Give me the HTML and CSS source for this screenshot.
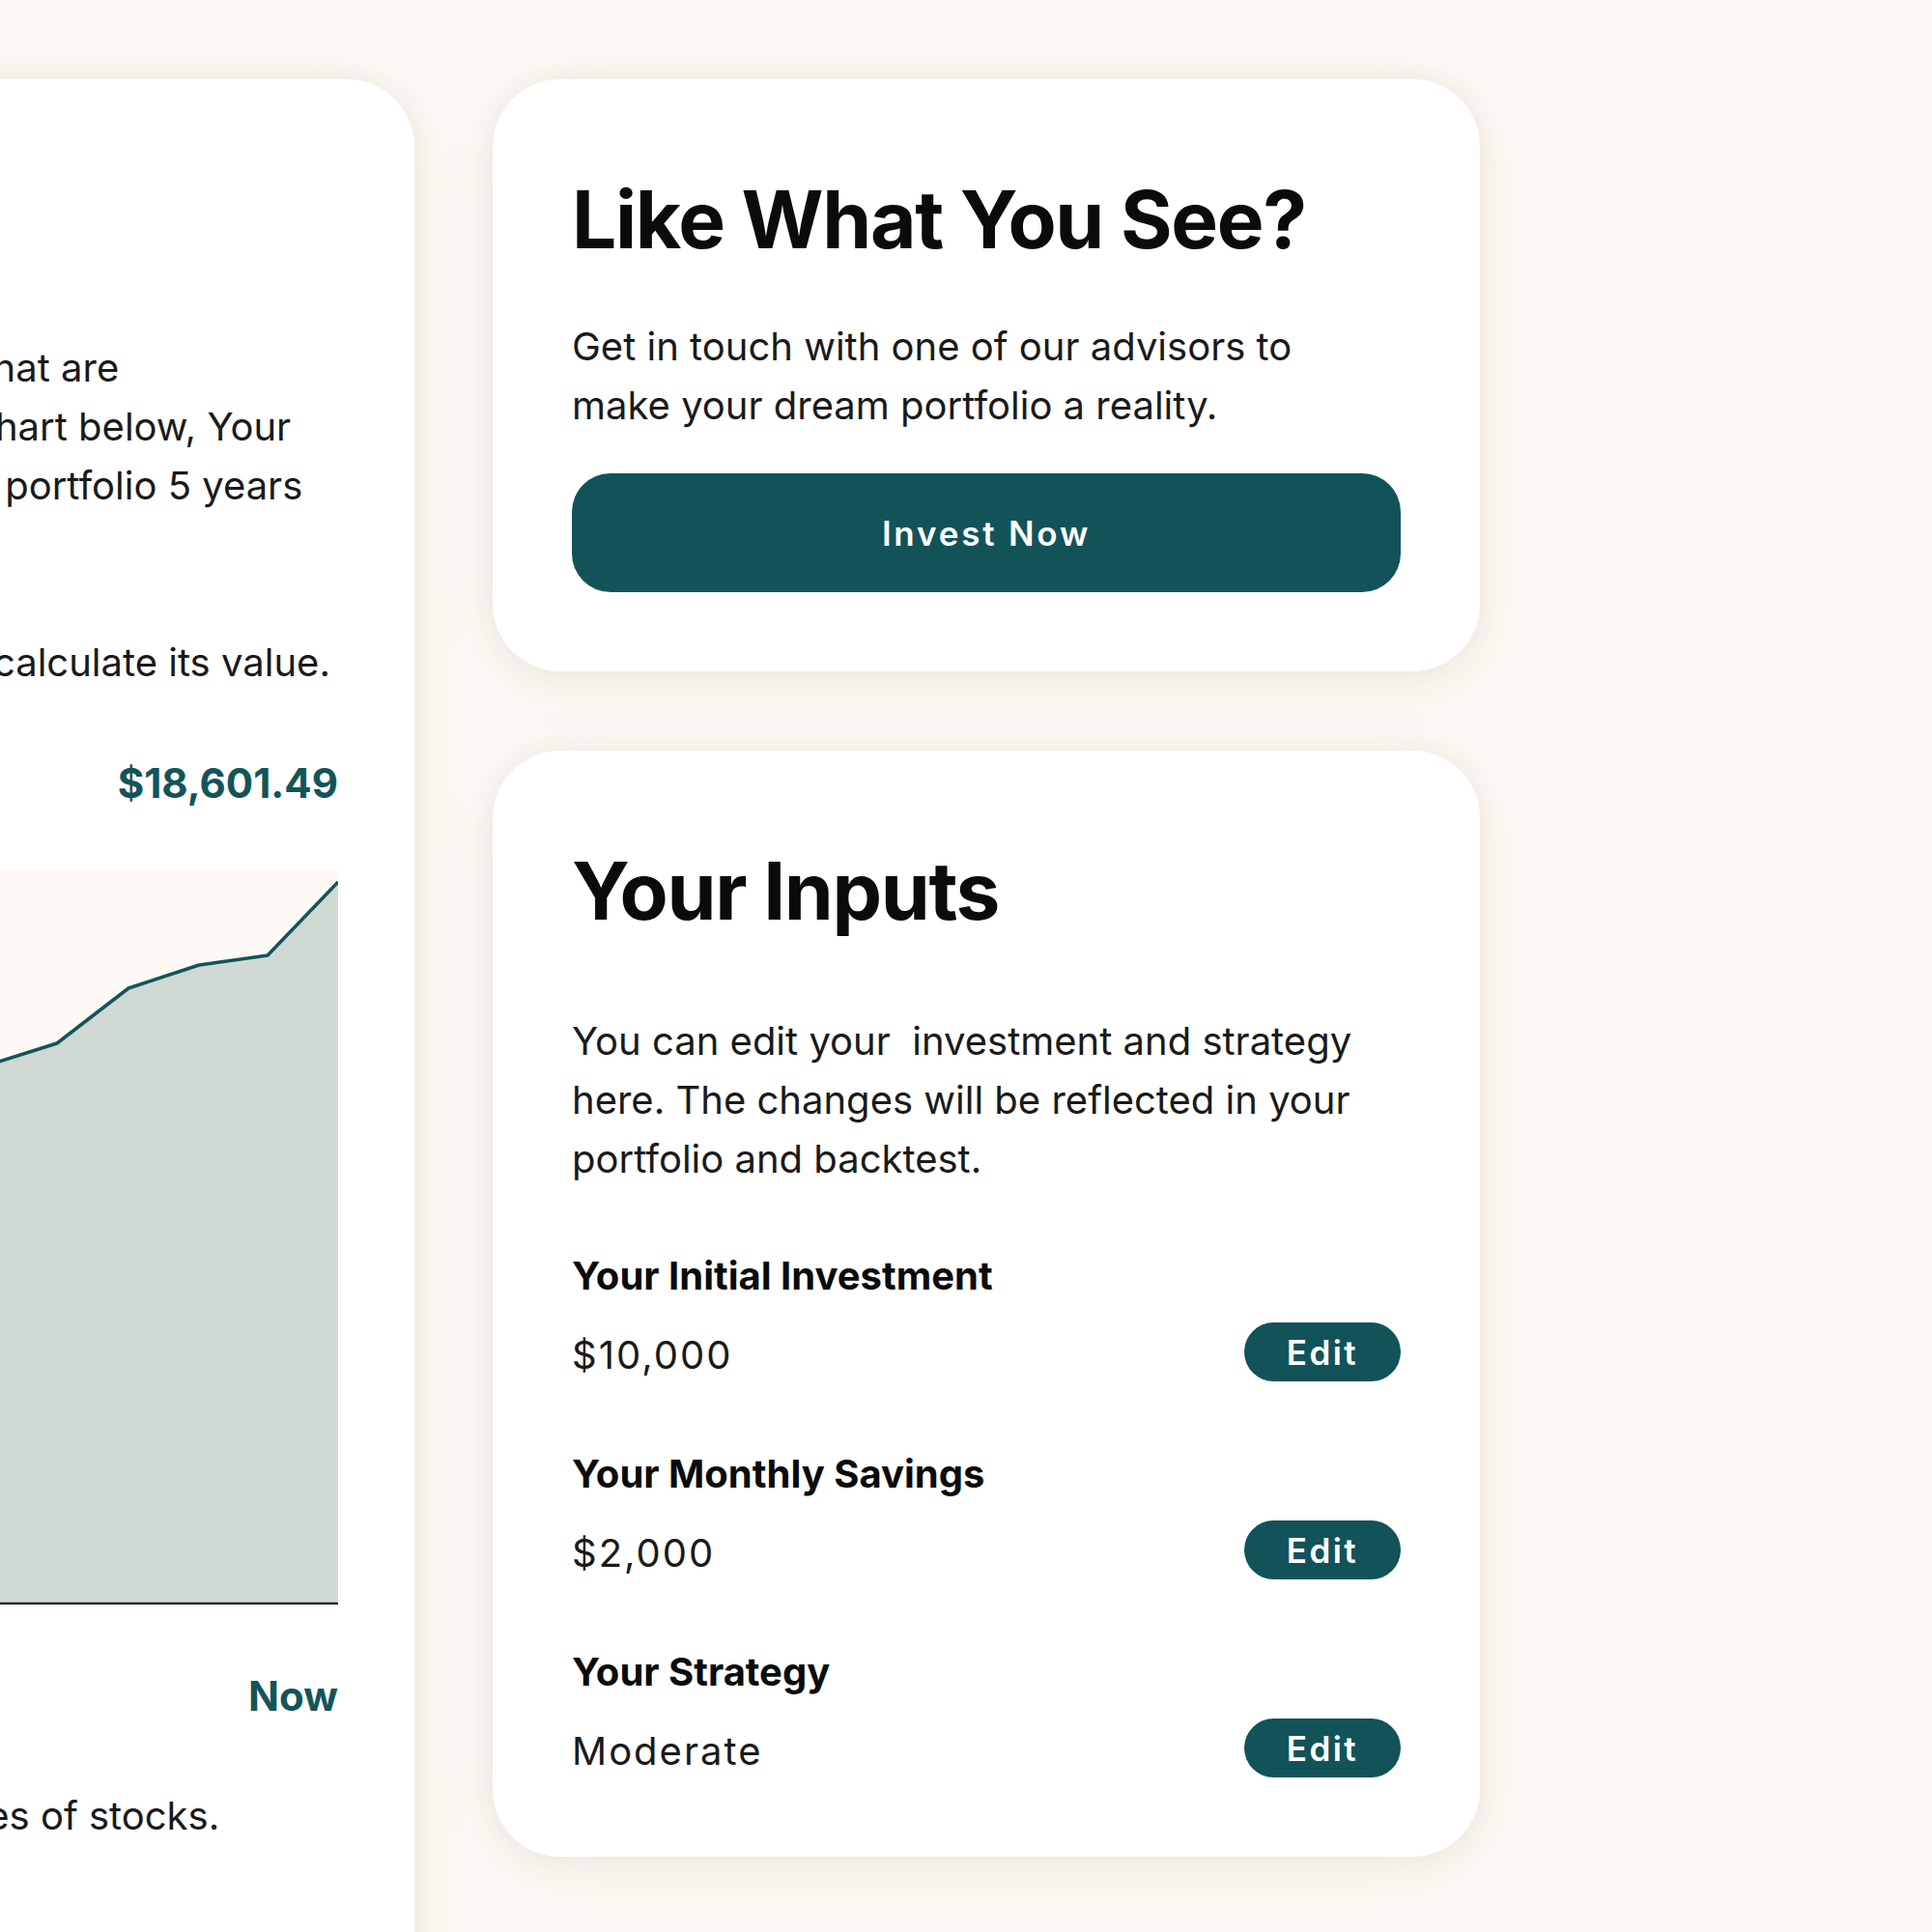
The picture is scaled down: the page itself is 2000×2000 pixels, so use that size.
FILE: index.html
```html
<!DOCTYPE html>
<html lang="en">
<head>
<meta charset="utf-8">
<title>Your Portfolio</title>
<link rel="stylesheet" href="styles.css">
</head>
<body>
<main class="page">
  <section class="card backtest">
    <h2 class="title">Backtest</h2>
    <div class="copy copy-first">
      <div class="line">Backtesting shows what are</div>
      <div class="line">all the results in the chart below, Your</div>
      <div class="line">the real value of your portfolio 5 years</div>
      <div class="line">ago until today.</div>
    </div>
    <div class="copy copy-second">
      <div class="line">We use the prices to calculate its value.</div>
    </div>
    <div class="stat-row">
      <span class="stat-label">Today</span>
      <span class="stat-value">$18,601.49</span>
    </div>
    <div class="chart">
      <svg class="chart-svg" viewBox="0 0 742 761" preserveAspectRatio="none">
        <rect x="0" y="0" width="742" height="761" fill="#fdf9f4"/>
        <polygon fill="#cfd8d3" points="0,430 51,390 121,340 191,290 261,250 331,220 391,199 451,180 525,123 598,99 669,89 742,13 742,761 0,761"/>
        <polyline fill="none" stroke="#13545a" stroke-width="3.5" stroke-linejoin="round" points="0,430 51,390 121,340 191,290 261,250 331,220 391,199 451,180 525,123 598,99 669,89 742,13"/>
        <line x1="0" y1="760" x2="742" y2="760" stroke="#1d1d1d" stroke-width="2.5"/>
      </svg>
    </div>
    <div class="axis-row">
      <span class="axis-label">5 Years Ago</span>
      <span class="axis-label">Now</span>
    </div>
    <div class="copy copy-note">
      <div class="line">Based on recent prices of stocks.</div>
    </div>
  </section>

  <div class="side">
    <section class="card cta">
      <h2 class="title">Like What You See?</h2>
      <p class="text cta-text">Get in touch with one of our advisors to make your dream portfolio a reality.</p>
      <button class="btn-primary" type="button">Invest Now</button>
    </section>

    <section class="card inputs">
      <h2 class="title">Your Inputs</h2>
      <p class="text inputs-text">You can edit your&nbsp; investment and strategy here. The changes will be reflected in your portfolio and backtest.</p>
      <div class="field">
        <div class="field-label">Your Initial Investment</div>
        <div class="field-row">
          <span class="field-value">$10,000</span>
          <button class="btn-edit" type="button">Edit</button>
        </div>
      </div>
      <div class="field">
        <div class="field-label">Your Monthly Savings</div>
        <div class="field-row">
          <span class="field-value">$2,000</span>
          <button class="btn-edit" type="button">Edit</button>
        </div>
      </div>
      <div class="field">
        <div class="field-label">Your Strategy</div>
        <div class="field-row">
          <span class="field-value">Moderate</span>
          <button class="btn-edit" type="button">Edit</button>
        </div>
      </div>
    </section>
  </div>
</main>
</body>
</html>
```

FILE: styles.css
```css
* { box-sizing: border-box; }

html, body {
  margin: 0;
  padding: 0;
  background: #fdf9f4;
  overflow: hidden;
}

body {
  font-family: Inter, "Noto Sans", sans-serif;
  color: #161616;
  width: 2000px;
  height: 2000px;
}

.page {
  display: flex;
  align-items: flex-start;
  gap: 81px;
  padding-top: 82px;
  margin-left: -471px;
}

.card {
  background: #ffffff;
  border-radius: 70px;
  box-shadow: 0 10px 60px rgba(110, 90, 60, 0.10), 0 0 24px rgba(110, 90, 60, 0.05);
}

.title {
  margin: 0;
  font-size: 82px;
  line-height: 98px;
  font-weight: 700;
  letter-spacing: -0.017em;
  color: #0b0b0b;
}

/* Left backtest card */
.backtest {
  width: 900px;
  flex: 0 0 900px;
  padding: 97px 79px 120px 65px;
  height: 2100px;
}

.copy {
  font-size: 40px;
  line-height: 61px;
  letter-spacing: 0;
  color: #1a1a1a;
}

.line { white-space: nowrap; }

.copy-first { margin-top: 73px; }
.copy-second { margin-top: 61px; }
.copy-note { margin-top: 68px; }

.stat-row,
.axis-row {
  display: flex;
  justify-content: space-between;
  align-items: baseline;
  font-size: 42px;
  line-height: 50px;
  font-weight: 700;
  color: #13545a;
}

.stat-row { margin-top: 70px; }
.stat-label { font-weight: 600; }
.stat-value { letter-spacing: 0; }

.chart {
  display: flex;
  justify-content: flex-end;
  margin-top: 64px;
  height: 761px;
}

.chart-svg {
  display: block;
  width: 742px;
  height: 761px;
}

.axis-row { margin-top: 70px; }

/* Right column */
.side {
  display: flex;
  flex-direction: column;
  gap: 82px;
  width: 1022px;
  flex: 0 0 1022px;
}

.cta,
.inputs {
  padding: 97px 82px 82px 82px;
}

.text {
  margin: 0;
  font-size: 40px;
  line-height: 61px;
  letter-spacing: 0;
  color: #1a1a1a;
}

.cta-text { margin-top: 51px; max-width: 830px; }
.inputs-text { margin-top: 75px; max-width: 840px; }

.btn-primary {
  display: block;
  width: 100%;
  height: 123px;
  margin-top: 40px;
  border: none;
  border-radius: 40px;
  background: #12535a;
  color: #ffffff;
  font-family: Inter, "Noto Sans", sans-serif;
  font-size: 35px;
  font-weight: 600;
  letter-spacing: 0.08em;
  cursor: pointer;
}

.field { margin-top: 67px; }
.field + .field { margin-top: 72px; }

.field-label {
  font-size: 40px;
  line-height: 48px;
  font-weight: 700;
  letter-spacing: 0;
  color: #0b0b0b;
}

.field-row {
  display: flex;
  justify-content: space-between;
  align-items: center;
  margin-top: 24px;
  height: 61px;
}

.field-value {
  font-size: 40px;
  line-height: 61px;
  letter-spacing: 0.05em;
  color: #1a1a1a;
  padding-top: 5px;
}

.btn-edit {
  width: 162px;
  height: 61px;
  border: none;
  border-radius: 31px;
  background: #12535a;
  color: #ffffff;
  font-family: Inter, "Noto Sans", sans-serif;
  font-size: 35px;
  font-weight: 600;
  letter-spacing: 0.07em;
  cursor: pointer;
}
```
